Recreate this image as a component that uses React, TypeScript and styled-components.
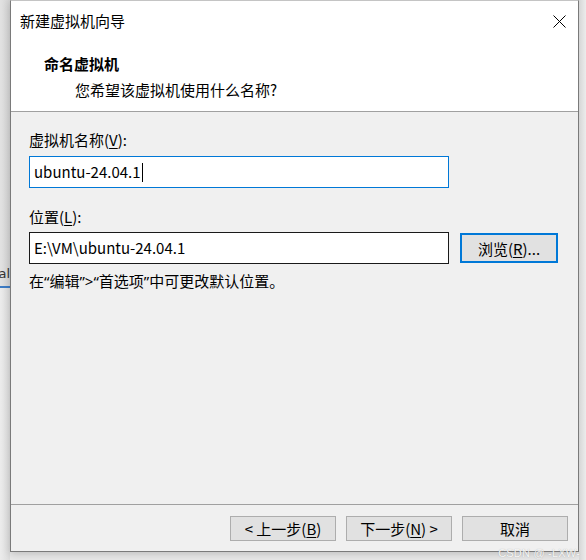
import React from "react";
import styled, { createGlobalStyle } from "styled-components";

const Global = createGlobalStyle`
  html, body { margin: 0; padding: 0; background: #e6e6e6; }
  body { font-family: "Noto Sans CJK SC", "Noto Sans", sans-serif; }
`;

const FONT = `"Noto Sans CJK SC", "Noto Sans", sans-serif`;

const Page = styled.div`
  width: 586px;
  height: 560px;
  display: flex;
  flex-direction: row;
  align-items: flex-start;
  overflow: hidden;
  position: relative;
  background: #e8e8e8;
`;

const LeftStrip = styled.div`
  width: 10px;
  height: 560px;
  flex: none;
  display: flex;
  flex-direction: column;
  background: linear-gradient(to right, #e2e2e2, #d4d4d4);
  overflow: hidden;
`;

const StripTop = styled.div`
  height: 264px;
`;

const StripText = styled.div`
  height: 20px;
  display: flex;
  justify-content: flex-end;
  font-family: "DejaVu Sans", sans-serif;
  font-size: 13px;
  line-height: 20px;
  color: #333;
  white-space: nowrap;
`;

const StripLine = styled.div`
  margin-top: 2px;
  height: 2px;
  background: #3e7cc4;
`;

const StripBottom = styled.div`
  flex: 1;
  background: linear-gradient(to right, #ececec, #dcdcdc);
`;

const Dialog = styled.div`
  width: 567px;
  height: 550px;
  flex: none;
  display: flex;
  flex-direction: column;
  border: 1px solid #7a7a7a;
  border-top-color: #c4c4c4;
  background: #f0f0f0;
  font-family: ${FONT};
  color: #000;
  box-shadow: 0 2px 8px rgba(0, 0, 0, 0.18);
`;

const Header = styled.div`
  height: 110px;
  background: #ffffff;
  display: flex;
  flex-direction: column;
  border-bottom: 1px solid #a0a0a0;
`;

const TitleRow = styled.div`
  height: 40px;
  display: flex;
  align-items: center;
  justify-content: space-between;
  padding: 0 12px 0 9px;
`;

const Title = styled.div`
  font-size: 15px;
  line-height: 20px;
`;

const CloseBtn = styled.div`
  width: 14px;
  height: 14px;
  display: flex;
  align-items: center;
  justify-content: center;
`;

const Heading = styled.div`
  margin: 13px 0 0 33px;
  font-size: 15px;
  font-weight: 700;
  line-height: 20px;
`;

const SubHeading = styled.div`
  margin: 6px 0 0 64px;
  font-size: 15px;
  line-height: 20px;
`;

const Body = styled.div`
  flex: 1;
  display: flex;
  flex-direction: column;
  padding: 18px 0 0 18px;
`;

const Label = styled.div<{ $top: number }>`
  margin-top: ${(p) => p.$top}px;
  font-size: 15px;
  line-height: 20px;
`;

const U = styled.span`
  text-decoration: underline;
  text-underline-offset: 2px;
`;

const Q = styled.span`
  font-family: "Noto Sans", sans-serif;
`;

const Field = styled.div<{ $focused?: boolean }>`
  box-sizing: border-box;
  width: 420px;
  height: 32px;
  background: #fff;
  border: 1px solid ${(p) => (p.$focused ? "#0078d7" : "#1a1a1a")};
  display: flex;
  align-items: center;
  padding-left: 4px;
  font-size: 15px;
  line-height: 20px;
`;

const Caret = styled.span`
  display: inline-block;
  width: 1px;
  height: 19px;
  background: #000;
  margin-left: 1px;
`;

const FieldRow = styled.div<{ $top: number }>`
  margin-top: ${(p) => p.$top}px;
  display: flex;
  align-items: center;
  gap: 11px;
`;

const BrowseButton = styled.div`
  box-sizing: border-box;
  width: 98px;
  height: 30px;
  border: 2px solid #0078d7;
  background: #e1e1e1;
  display: flex;
  align-items: center;
  justify-content: center;
  font-size: 15px;
`;

const Hint = styled.div`
  margin-top: 7px;
  font-size: 15px;
  line-height: 20px;
`;

const Footer = styled.div`
  height: 47px;
  box-sizing: border-box;
  border-top: 1px solid #a0a0a0;
  display: flex;
  justify-content: flex-end;
  align-items: flex-start;
  gap: 10px;
  padding: 11px 10px 0 0;
`;

const Button = styled.div`
  box-sizing: border-box;
  width: 106px;
  height: 25px;
  border: 1px solid #adadad;
  background: #e1e1e1;
  display: flex;
  align-items: center;
  justify-content: center;
  font-size: 15px;
  line-height: 20px;
  white-space: pre;
`;

const RightStrip = styled.div`
  flex: 1;
  height: 560px;
  background: linear-gradient(to right, #d6d6d6, #ececec);
`;

const Watermark = styled.div`
  position: absolute;
  right: 6px;
  bottom: 1px;
  font-family: "Liberation Sans", sans-serif;
  font-size: 11px;
  color: rgba(255, 255, 255, 0.9);
  text-shadow: 0 0 1px rgba(120, 120, 120, 0.6);
  letter-spacing: 0.2px;
`;

export default function App() {
  return (
    <>
      <Global />
      <Page>
        <LeftStrip>
          <StripTop />
          <StripText>cal</StripText>
          <StripLine />
          <StripBottom />
        </LeftStrip>
        <Dialog>
          <Header>
            <TitleRow>
              <Title>新建虚拟机向导</Title>
              <CloseBtn>
                <svg width="13" height="13" viewBox="0 0 13 13">
                  <path d="M0.5 0.5 L12.5 12.5 M12.5 0.5 L0.5 12.5" stroke="#000" strokeWidth="1" fill="none" />
                </svg>
              </CloseBtn>
            </TitleRow>
            <Heading>命名虚拟机</Heading>
            <SubHeading>您希望该虚拟机使用什么名称?</SubHeading>
          </Header>
          <Body>
            <Label $top={0}>
              虚拟机名称(<U>V</U>):
            </Label>
            <FieldRow $top={6}>
              <Field $focused>
                ubuntu-24.04.1
                <Caret />
              </Field>
            </FieldRow>
            <Label $top={19}>
              位置(<U>L</U>):
            </Label>
            <FieldRow $top={5}>
              <Field>E:\VM\ubuntu-24.04.1</Field>
              <BrowseButton>
                浏览(<U>R</U>)...
              </BrowseButton>
            </FieldRow>
            <Hint>
              在<Q>“</Q>编辑<Q>”&gt;“</Q>首选项<Q>”</Q>中可更改默认位置。
            </Hint>
          </Body>
          <Footer>
            <Button>
              {"< 上一步("}<U>B</U>)
            </Button>
            <Button>
              下一步(<U>N</U>){" >"}
            </Button>
            <Button>取消</Button>
          </Footer>
        </Dialog>
        <RightStrip />
        <Watermark>CSDN @ -LXW-</Watermark>
      </Page>
    </>
  );
}
